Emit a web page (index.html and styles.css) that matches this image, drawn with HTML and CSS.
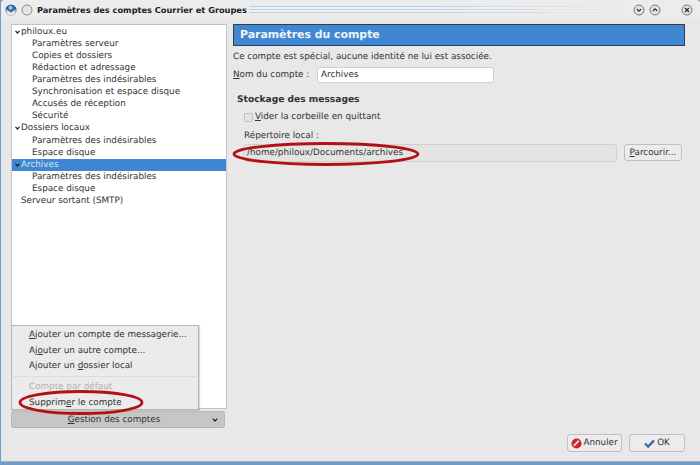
FILE: index.html
```html
<!DOCTYPE html>
<html lang="fr">
<head>
<meta charset="utf-8">
<title>Paramètres des comptes Courrier et Groupes</title>
<link rel="stylesheet" href="styles.css">
</head>
<body>
<div class="window">
  <header class="titlebar">
    <svg class="app-icon" width="12" height="12" viewBox="0 0 12 12"><circle cx="6" cy="6" r="5.500" fill="#2f66a8"/><path d="M1.500 5.500L6 8.500l4.500-3v3.300a5 5 0 0 1-9 0z" fill="#e6e6e6"/><circle cx="5.500" cy="3.800" r="2" fill="#a9c0d8"/></svg>
    <svg class="round-btn pin" width="12" height="12" viewBox="0 0 12 12"><circle cx="6" cy="6" r="5" fill="#e4e4e4" stroke="#8a8a8a"/></svg>
    <span class="title-text">Paramètres des comptes Courrier et Groupes</span>
    <span class="title-lines"></span>
    <svg class="round-btn" width="12" height="12" viewBox="0 0 12 12"><circle cx="6" cy="6" r="5" fill="#e4e4e4" stroke="#777"/><path d="M3.800 5l2.200 2.200L8.200 5" fill="none" stroke="#333" stroke-width="1.200"/></svg>
    <svg class="round-btn max" width="12" height="12" viewBox="0 0 12 12"><circle cx="6" cy="6" r="5" fill="#e4e4e4" stroke="#777"/><path d="M3.800 7L6 4.800 8.200 7" fill="none" stroke="#333" stroke-width="1.200"/></svg>
    <svg class="round-btn close" width="12" height="12" viewBox="0 0 12 12"><circle cx="6" cy="6" r="5" fill="#e4e4e4" stroke="#777"/><path d="M4 4l4 4M8 4l-4 4" fill="none" stroke="#333" stroke-width="1.400"/></svg>
  </header>
  <div class="content">
    <aside class="side">
      <div class="tree">
        <div class="row top"><svg class="arrow" width="5" height="4" viewBox="0 0 5 4"><path d="M.5.800L2.500 3 4.500.800" fill="none" stroke="#222" stroke-width="1.200"/></svg>philoux.eu</div>
        <div class="row sub">Paramètres serveur</div>
        <div class="row sub">Copies et dossiers</div>
        <div class="row sub">Rédaction et adressage</div>
        <div class="row sub">Paramètres des indésirables</div>
        <div class="row sub">Synchronisation et espace disque</div>
        <div class="row sub">Accusés de réception</div>
        <div class="row sub">Sécurité</div>
        <div class="row top"><svg class="arrow" width="5" height="4" viewBox="0 0 5 4"><path d="M.5.800L2.500 3 4.500.800" fill="none" stroke="#222" stroke-width="1.200"/></svg>Dossiers locaux</div>
        <div class="row sub">Paramètres des indésirables</div>
        <div class="row sub">Espace disque</div>
        <div class="row top selected"><svg class="arrow" width="5" height="4" viewBox="0 0 5 4"><path d="M.5.800L2.500 3 4.500.800" fill="none" stroke="#222" stroke-width="1.200"/></svg>Archives</div>
        <div class="row sub">Paramètres des indésirables</div>
        <div class="row sub">Espace disque</div>
        <div class="row plain">Serveur sortant (SMTP)</div>
      </div>
      <div class="menu">
        <div class="menu-item"><u>A</u>jouter un compte de messagerie...</div>
        <div class="menu-item">Aj<u>o</u>uter un autre compte...</div>
        <div class="menu-item">Ajouter un <u>d</u>ossier local</div>
        <div class="menu-sep"></div>
        <div class="menu-item disabled">Compte par défaut</div>
        <div class="menu-item">Supprim<u>e</u>r le compte</div>
      </div>
      <div class="manage">
        <span class="manage-label"><u>G</u>estion des comptes</span>
        <svg class="manage-arrow" width="6" height="4" viewBox="0 0 6 4"><path d="M.8.600L3 3l2.200-2.400" fill="none" stroke="#222" stroke-width="1.200"/></svg>
      </div>
    </aside>
    <main class="main">
      <h1 class="banner">Paramètres du compte</h1>
      <p class="note">Ce compte est spécial, aucune identité ne lui est associée.</p>
      <div class="name-row">
        <label class="name-label"><u>N</u>om du compte :</label>
        <div class="input">Archives</div>
      </div>
      <h2 class="section">Stockage des messages</h2>
      <div class="group">
        <div class="check-row"><span class="check"></span><span><u>V</u>ider la corbeille en quittant</span></div>
        <div class="dir-label">Répertoire local :</div>
        <div class="dir-row">
          <div class="dir-input">/home/philoux/Documents/archives</div>
          <div class="btn browse"><span><u>P</u>arcourir...</span></div>
        </div>
      </div>
      <footer class="actions">
        <div class="btn cancel"><svg width="11" height="11" viewBox="0 0 12 12"><circle cx="6" cy="6" r="5.500" fill="#c9252b"/><path d="M3 8.500L8.500 3" stroke="#f3d6d6" stroke-width="2"/></svg>Annuler</div>
        <div class="btn ok"><svg width="11" height="9" viewBox="0 0 12 10"><path d="M1 5l3.500 3.500L11 1.500" fill="none" stroke="#3c6ea3" stroke-width="2.600"/></svg>OK</div>
      </footer>
    </main>
  </div>
  <svg class="ring ring-dir" width="188" height="24" viewBox="0 0 188 24"><ellipse cx="94" cy="12" rx="92" ry="10.500" fill="none" stroke="#b30f16" stroke-width="2.800"/></svg>
  <svg class="ring ring-del" width="126" height="25" viewBox="0 0 126 25"><ellipse cx="63" cy="12.500" rx="61" ry="11" fill="none" stroke="#b30f16" stroke-width="2.800"/></svg>
</div>
</body>
</html>
```
FILE: styles.css
```css
* { box-sizing: border-box; }
html, body { margin: 0; padding: 0; }
body {
  width: 700px; height: 465px; overflow: hidden;
  background: #6f9cc4;
  font-family: "DejaVu Sans", sans-serif;
  font-size: 8.800px;
  color: #333;
  text-rendering: geometricPrecision;
}
u { text-decoration-thickness: 1px; text-underline-offset: 1px; }
.window {
  position: relative;
  width: 699px; height: 462px;
  margin-left: 1px;
  background: #e8e8e8;
  border-bottom: 1px solid #9fb0bd;
  display: flex; flex-direction: column;
  border-radius: 4px 4px 0 0;
  overflow: hidden;
}
.titlebar {
  height: 18px; flex: none;
  display: flex; align-items: center;
  padding: 1px 7px 0 4px;
  background: #ececec;
}
.app-icon { margin-right: 4px; flex: none; }
.round-btn { flex: none; }
.pin { margin-right: 4px; }
.title-text { font-weight: bold; font-size: 8.220px; color: #222; white-space: nowrap; }
.title-lines {
  flex: 1; height: 7px; margin: 0 3px 0 3px;
  background: repeating-linear-gradient(#b9cde0 0 1px, #eef2f6 1px 3px);
  -webkit-mask-image: linear-gradient(90deg, #000 40%, transparent);
  mask-image: linear-gradient(90deg, #000 40%, transparent);
}
.max { margin-left: 4px; margin-right: 20px; }
.content { flex: 1; display: flex; padding: 6px 15px 9px 10px; gap: 6px; }
.side { position: relative; width: 216px; flex: none; display: flex; flex-direction: column; }
.tree {
  height: 385px;
  background: #fff;
  border: 1px solid #c3c3c3;
  padding-top: .7px;
}
.row { height: 12.100px; line-height: 12px; white-space: nowrap; }
.sub { padding-left: 20px; }
.top { display: flex; align-items: center; padding-left: 3px; }
.plain { padding-left: 9px; }
.arrow { margin-right: 1px; }
.selected { background: #3f87d2; color: #d5e3f2; }
.menu {
  position: absolute; left: 0; top: 301px;
  width: 188px; height: 85px;
  background: #ebebeb;
  border: 1px solid #b5b5b5;
  box-shadow: 1px 1px 1px rgba(0,0,0,.15);
  padding-top: 1px;
}
.menu-item { height: 15.500px; line-height: 16px; padding-left: 17px; white-space: nowrap; }
.menu-sep { height: 1px; background: #dcdcdc; margin: 2px 1px; }
.disabled { color: #b0b0b0; height: 16px; line-height: 16px; }
.manage {
  height: 17px; margin-top: 2px; width: 214px;
  display: flex; align-items: center; justify-content: center;
  position: relative;
  background: #c8c6c2;
  border: 1px solid #bcbab6;
  border-bottom-color: #a9b4c0;
  border-radius: 3px;
}
.manage-label { margin-right: 8px; }
.manage-arrow { position: absolute; right: 6px; top: 6px; }
.main { flex: 1; min-width: 0; display: flex; flex-direction: column; }
.banner {
  margin: 0; height: 22px; flex: none;
  background: #3f87d2;
  border: 1px solid #29415e;
  border-top-color: #3d3a38;
  color: #f0f4f8;
  font-size: 10.900px; font-weight: bold;
  line-height: 20px; padding-left: 6px;
}
.note { margin: 5px 0 0; line-height: 12px; }
.name-row { display: flex; align-items: center; margin-top: 4px; }
.name-label { width: 84px; flex: none; }
.input {
  width: 177px; height: 16px;
  background: #fff;
  border: 1px solid #cfcfcf;
  border-radius: 3px;
  padding-left: 3px; line-height: 14px;
}
.section { margin: 11px 0 0 4px; font-size: 9.100px; font-weight: bold; line-height: 12px; color: #333; }
.group { padding-left: 10px; }
.check-row { display: flex; align-items: center; gap: 2px; margin-top: 5px; padding-left: 1px; line-height: 12px; }
.check { width: 9px; height: 9px; background: #e4e4e4; border: 1px solid #c2c2c2; border-radius: 1px; }
.dir-label { margin-top: 7px; padding-left: 1px; line-height: 12px; }
.dir-row { display: flex; align-items: flex-start; margin-top: 2px; }
.dir-input {
  width: 374px; height: 18px;
  background: #e4e4e4;
  border: 1px solid #d0d0d0;
  border-radius: 3px;
  padding-left: 3px; line-height: 16px;
}
.btn {
  display: flex; align-items: center; justify-content: center;
  background: #ececec;
  border: 1px solid #c0c0c0;
  border-radius: 3px;
}
.browse { width: 58px; height: 17px; margin-left: 7px; }
.actions { margin-top: auto; display: flex; justify-content: flex-end; gap: 7px; }
.cancel { width: 55px; height: 18px; gap: 1px; }
.ok { width: 56px; height: 18px; gap: 2px; }
.ring { position: absolute; }
.ring-dir { left: 231px; top: 142px; }
.ring-del { left: 17px; top: 390px; }
```
